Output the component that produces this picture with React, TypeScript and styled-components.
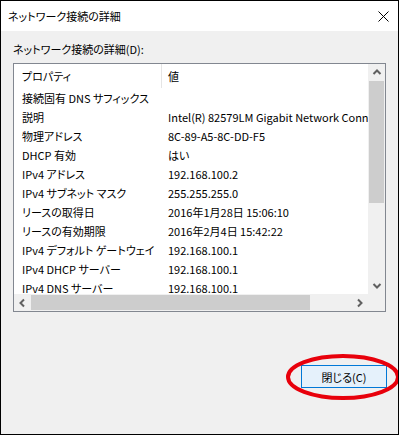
import * as React from 'react';
import styled, { createGlobalStyle } from 'styled-components';

const GlobalStyle = createGlobalStyle`
	html, body {
		margin: 0;
		padding: 0;
		background: #ffffff;
	}
	body {
		font-family: "Noto Sans CJK JP", "Noto Sans", sans-serif;
		font-feature-settings: "palt";
	}
`;

const Window = styled.div`
	position: relative;
	width: 399px;
	height: 435px;
	box-sizing: border-box;
	border: 1px solid #000000;
	background: #f0f0f0;
	display: flex;
	flex-direction: column;
	overflow: hidden;
`;

const TitleBar = styled.div`
	height: 30px;
	background: #ffffff;
	display: flex;
	align-items: center;
	justify-content: space-between;
	padding: 0 9px 0 7px;
	font-size: 11px;
	color: #000000;
`;

const CloseIcon = styled.svg`
	width: 11px;
	height: 11px;
	display: block;
`;

const Body = styled.div`
	flex: 1;
	display: flex;
	flex-direction: column;
	padding: 10px 12px 0 12px;
`;

const Label = styled.div`
	font-size: 11px;
	line-height: 16px;
	height: 22px;
	color: #000000;
`;

const ListBox = styled.div`
	width: 373px;
	height: 249px;
	box-sizing: border-box;
	border: 1px solid #828790;
	background: #ffffff;
	display: grid;
	grid-template-columns: 1fr 17px;
	grid-template-rows: 1fr 17px;
`;

const Viewport = styled.div`
	overflow: hidden;
	font-size: 11px;
	color: #000000;
`;

const HeaderRow = styled.div`
	display: grid;
	grid-template-columns: 147px 1fr;
	height: 24px;
	align-items: center;
`;

const HeaderCell = styled.div<{ $sep?: boolean }>`
	padding-left: ${(p) => (p.$sep ? '6px' : '8px')};
	height: 100%;
	display: flex;
	align-items: center;
	border-left: ${(p) => (p.$sep ? '1px solid #e5e5e5' : 'none')};
`;

const Row = styled.div`
	display: grid;
	grid-template-columns: 147px 1fr;
	height: 19px;
	align-items: center;
	white-space: nowrap;
`;

const Cell = styled.div<{ $value?: boolean }>`
	padding-left: ${(p) => (p.$value ? '7px' : '8px')};
	overflow: ${(p) => (p.$value ? 'hidden' : 'visible')};
`;

const VScroll = styled.div`
	background: #f0f0f0;
	display: flex;
	flex-direction: column;
	align-items: center;
`;

const HScroll = styled.div`
	background: #f0f0f0;
	display: flex;
	align-items: center;
`;

const ArrowBox = styled.div`
	width: 17px;
	height: 17px;
	display: flex;
	align-items: center;
	justify-content: center;
	flex-shrink: 0;
`;

const VThumb = styled.div`
	width: 15px;
	height: 122px;
	background: #cdcdcd;
`;

const HThumb = styled.div`
	height: 15px;
	width: 279px;
	background: #cdcdcd;
`;

const Spacer = styled.div`
	flex: 1;
`;

const Corner = styled.div`
	background: #f0f0f0;
`;

const Footer = styled.div`
	display: flex;
	justify-content: flex-end;
	padding: 53px 0 0 0;
`;

const Button = styled.button`
	width: 86px;
	height: 23px;
	box-sizing: border-box;
	border: 1px solid #0078d7;
	background: #e5f1fb;
	font-family: "Noto Sans CJK JP", "Noto Sans", sans-serif;
	font-feature-settings: "palt";
	font-size: 11px;
	color: #000000;
	padding: 0;
	margin-right: -1px;
`;

const Highlight = styled.svg`
	position: absolute;
	left: 284px;
	top: 352px;
	width: 116px;
	height: 48px;
	pointer-events: none;
`;

const Chevron = ({ dir }: { dir: 'up' | 'down' | 'left' | 'right' }) => {
	const paths: Record<string, string> = {
		up: 'M1.5 6 L5 2.5 L8.5 6',
		down: 'M1.5 3 L5 6.5 L8.5 3',
		left: 'M6 1.5 L2.5 5 L6 8.5',
		right: 'M3 1.5 L6.5 5 L3 8.5',
	};
	return (
		<svg width="10" height="10" viewBox="0 0 10 10">
			<path d={paths[dir]} fill="none" stroke="#606060" strokeWidth="2" />
		</svg>
	);
};

const rows: [string, string][] = [
	['接続固有 DNS サフィックス', ''],
	['説明', 'Intel(R) 82579LM Gigabit Network Connection'],
	['物理アドレス', '8C-89-A5-8C-DD-F5'],
	['DHCP 有効', 'はい'],
	['IPv4 アドレス', '192.168.100.2'],
	['IPv4 サブネット マスク', '255.255.255.0'],
	['リースの取得日', '2016年1月28日 15:06:10'],
	['リースの有効期限', '2016年2月4日 15:42:22'],
	['IPv4 デフォルト ゲートウェイ', '192.168.100.1'],
	['IPv4 DHCP サーバー', '192.168.100.1'],
	['IPv4 DNS サーバー', '192.168.100.1'],
];

export default function App() {
	return (
		<>
			<GlobalStyle />
			<Window>
				<TitleBar>
					<span>ネットワーク接続の詳細</span>
					<CloseIcon viewBox="0 0 11 11">
						<path d="M0.5 0.5 L10.5 10.5 M10.5 0.5 L0.5 10.5" stroke="#000" strokeWidth="1" />
					</CloseIcon>
				</TitleBar>
				<Body>
					<Label>ネットワーク接続の詳細(D):</Label>
					<ListBox>
						<Viewport>
							<HeaderRow>
								<HeaderCell>プロパティ</HeaderCell>
								<HeaderCell $sep>値</HeaderCell>
							</HeaderRow>
							{rows.map(([k, v]) => (
								<Row key={k}>
									<Cell>{k}</Cell>
									<Cell $value>{v}</Cell>
								</Row>
							))}
						</Viewport>
						<VScroll>
							<ArrowBox>
								<Chevron dir="up" />
							</ArrowBox>
							<VThumb />
							<Spacer />
							<ArrowBox>
								<Chevron dir="down" />
							</ArrowBox>
						</VScroll>
						<HScroll>
							<ArrowBox>
								<Chevron dir="left" />
							</ArrowBox>
							<HThumb />
							<Spacer />
							<ArrowBox>
								<Chevron dir="right" />
							</ArrowBox>
						</HScroll>
						<Corner />
					</ListBox>
					<Footer>
						<Button>閉じる(C)</Button>
					</Footer>
				</Body>
				<Highlight viewBox="0 0 116 48">
					<ellipse cx="58" cy="24" rx="55" ry="21" fill="none" stroke="#e8000b" strokeWidth="4" />
				</Highlight>
			</Window>
		</>
	);
}
